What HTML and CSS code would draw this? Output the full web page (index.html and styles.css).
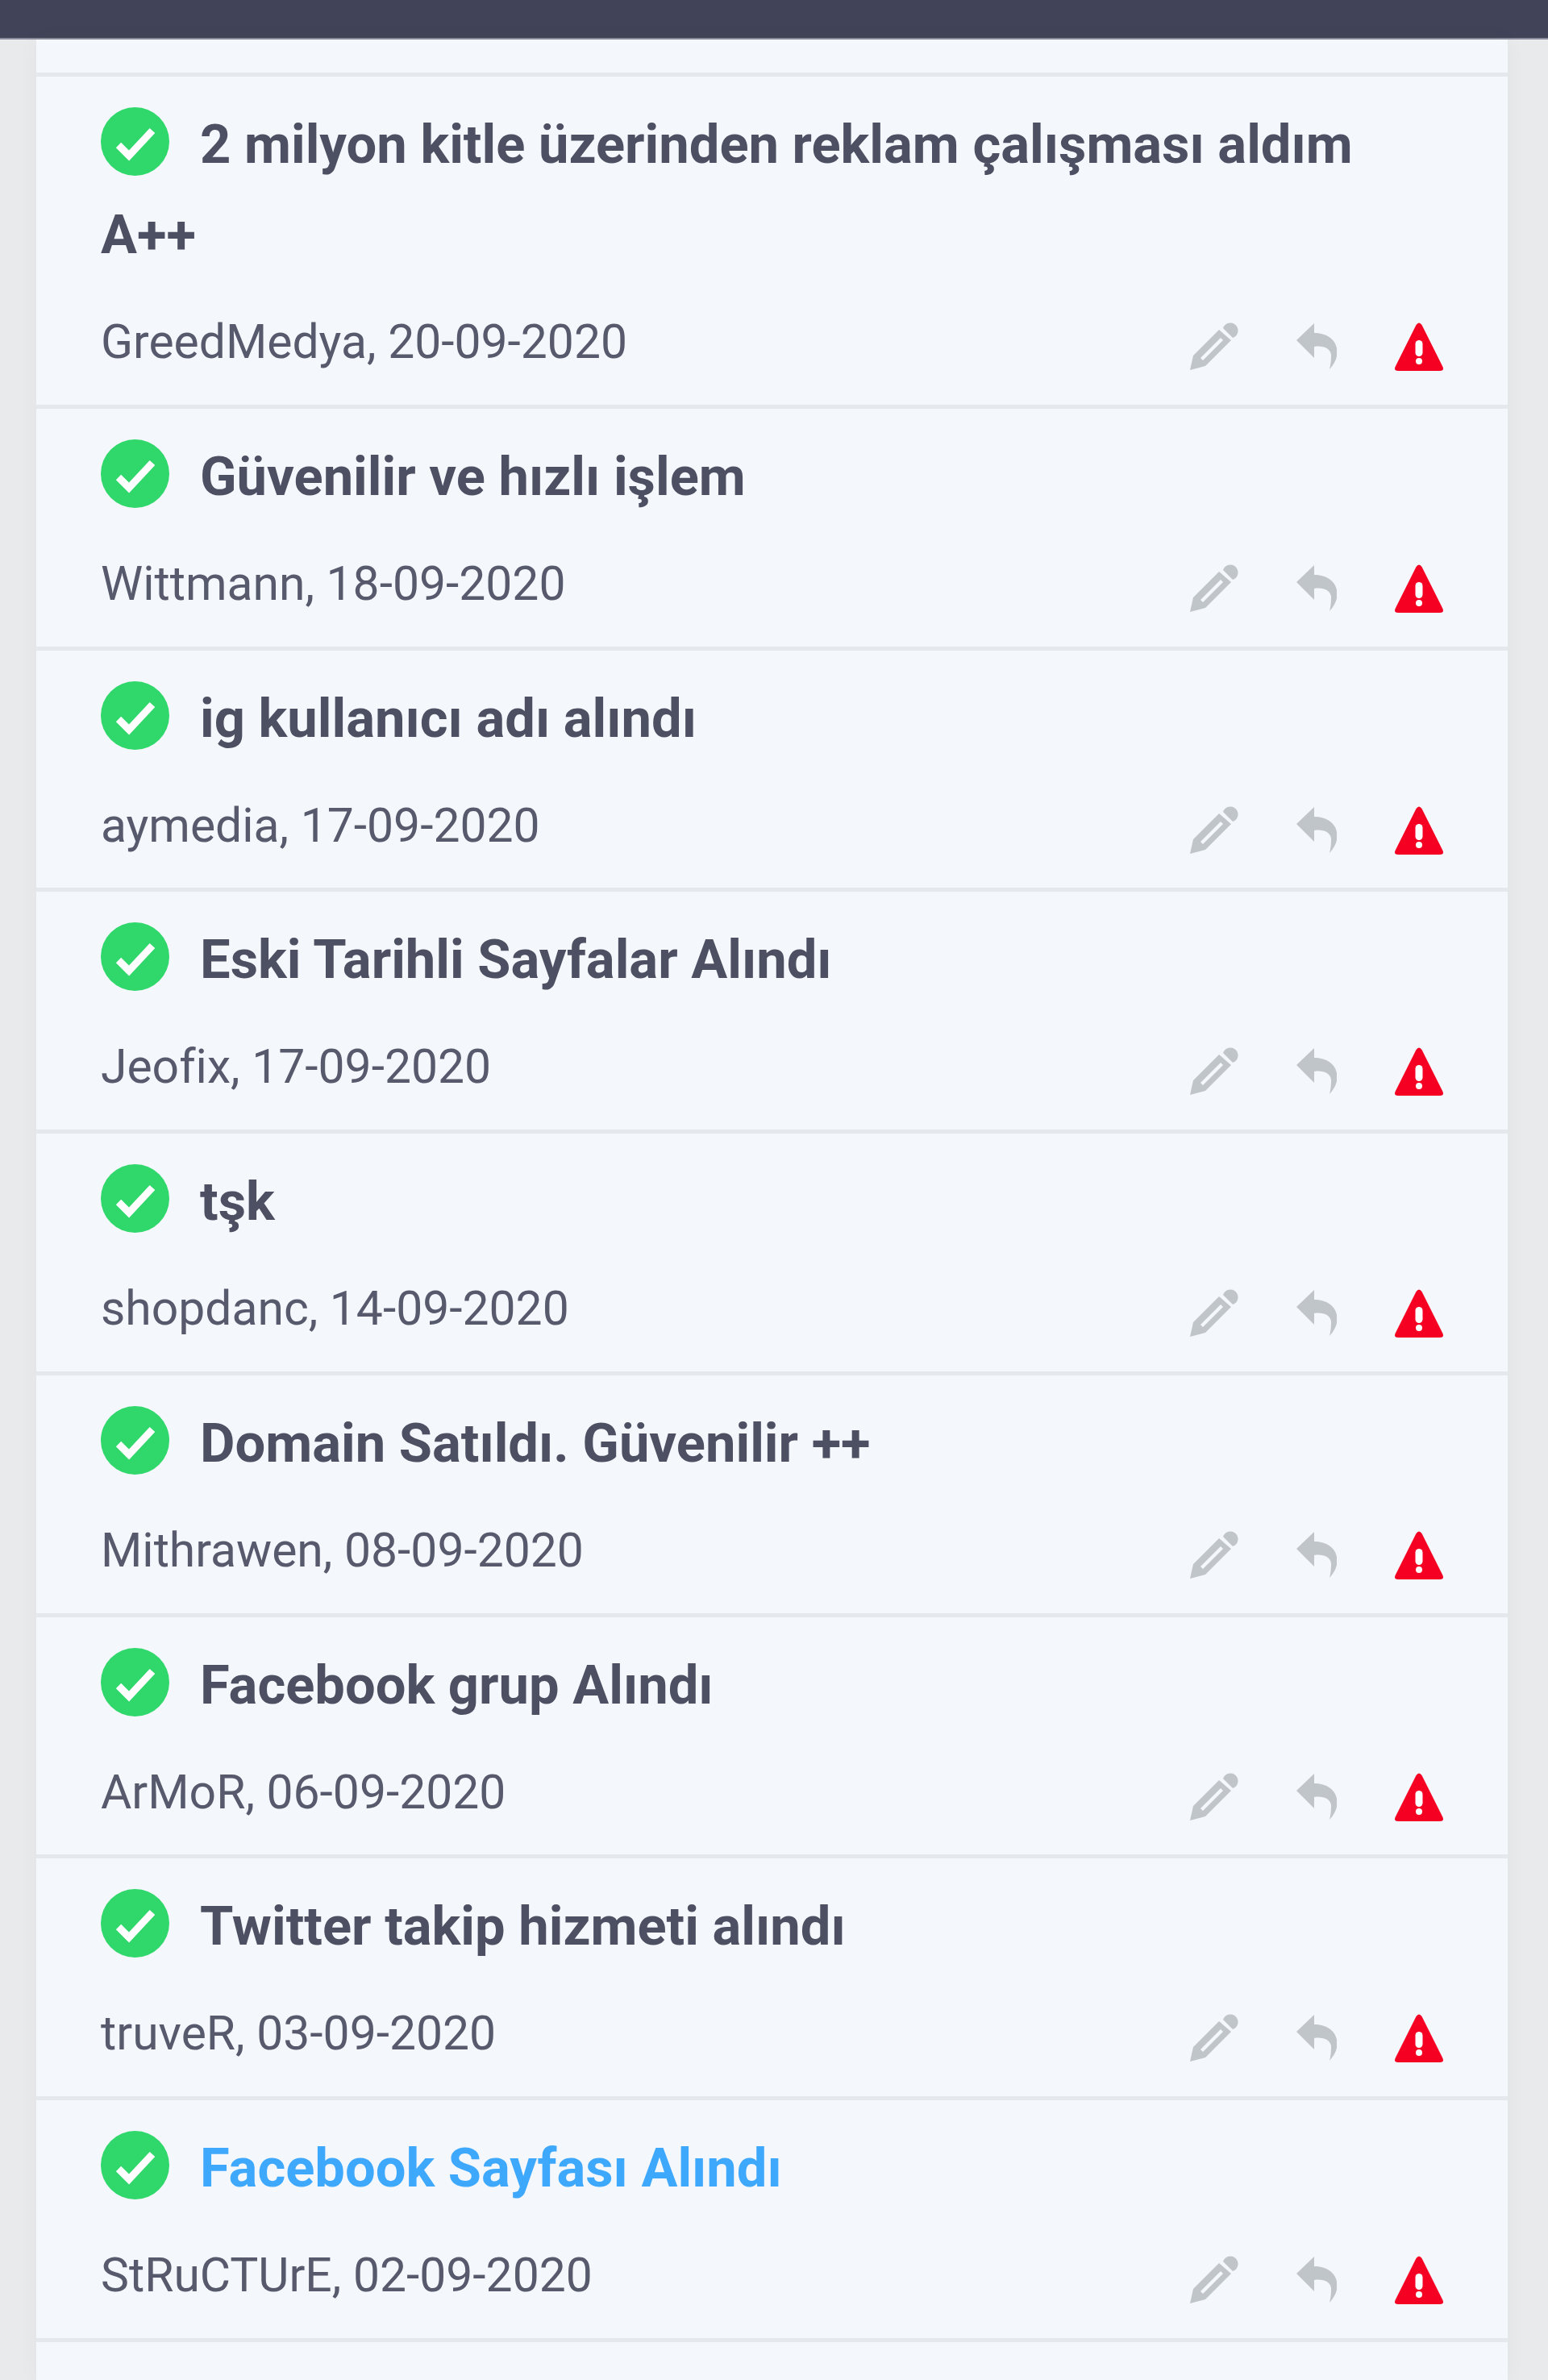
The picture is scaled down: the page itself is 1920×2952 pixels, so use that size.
FILE: index.html
```html
<!DOCTYPE html>
<html lang="tr">
<head>
    <meta charset="UTF-8">
    <meta name="viewport" content="width=device-width, initial-scale=1.0">
    <title>Yorumlar</title>
    <link rel="stylesheet" href="styles.css">
</head>
<body>
    <svg class="simgeler">
        <symbol id="onay" viewBox="0 0 85 85">
            <circle cx="42.5" cy="42.5" r="42.5" fill="#30d76a"/>
            <path d="M22 47 L35 60 L64 29" fill="none" stroke="#fff" stroke-width="9"/>
        </symbol>
        <symbol id="kalem" viewBox="0 0 60 60">
            <path fill-rule="evenodd" d="M0 59 L4 41 L36 9 L51 22 L19 54 Z M13 44 L16 47 L41 22 L38 19 Z"/>
            <path d="M41 7 A9.5 9.5 0 1 1 53 19 Z"/>
        </symbol>
        <symbol id="yanit" viewBox="0 0 50 60">
            <path d="M22 1 L0 22 L22 44 V30 C32 28 44 32 43 42 C43 48 42 54 41 58 C48 50 52 42 50 32 C48 20 36 13 22 13 Z"/>
        </symbol>
        <symbol id="uyari" viewBox="0 0 60 60">
            <path fill="#f50022" d="M26.5 3 Q30 -2 33.5 3 L59 54 Q62 60 56 60 H4 Q-2 60 1 54 Z"/>
            <rect x="25.5" y="22" width="9" height="20" rx="4.5" fill="#fff"/>
            <circle cx="30" cy="48" r="4" fill="#fff"/>
        </symbol>
    </svg>

    <div class="ust-bar"></div>

    <ul class="yorumlar">
        <li class="yorum-bos"></li>

        <li class="yorum">
            <div class="baslik"><svg class="onay"><use href="#onay"/></svg>2 milyon kitle üzerinden reklam çalışması aldım A++</div>
            <div class="alt">
                <span class="yazar">GreedMedya, 20-09-2020</span>
                <div class="islemler">
                    <svg class="kalem"><use href="#kalem"/></svg>
                    <svg class="yanit"><use href="#yanit"/></svg>
                    <svg class="uyari"><use href="#uyari"/></svg>
                </div>
            </div>
        </li>

        <li class="yorum">
            <div class="baslik"><svg class="onay"><use href="#onay"/></svg>Güvenilir ve hızlı işlem</div>
            <div class="alt">
                <span class="yazar">Wittmann, 18-09-2020</span>
                <div class="islemler">
                    <svg class="kalem"><use href="#kalem"/></svg>
                    <svg class="yanit"><use href="#yanit"/></svg>
                    <svg class="uyari"><use href="#uyari"/></svg>
                </div>
            </div>
        </li>

        <li class="yorum">
            <div class="baslik"><svg class="onay"><use href="#onay"/></svg>ig kullanıcı adı alındı</div>
            <div class="alt">
                <span class="yazar">aymedia, 17-09-2020</span>
                <div class="islemler">
                    <svg class="kalem"><use href="#kalem"/></svg>
                    <svg class="yanit"><use href="#yanit"/></svg>
                    <svg class="uyari"><use href="#uyari"/></svg>
                </div>
            </div>
        </li>

        <li class="yorum">
            <div class="baslik"><svg class="onay"><use href="#onay"/></svg>Eski Tarihli Sayfalar Alındı</div>
            <div class="alt">
                <span class="yazar">Jeofix, 17-09-2020</span>
                <div class="islemler">
                    <svg class="kalem"><use href="#kalem"/></svg>
                    <svg class="yanit"><use href="#yanit"/></svg>
                    <svg class="uyari"><use href="#uyari"/></svg>
                </div>
            </div>
        </li>

        <li class="yorum">
            <div class="baslik"><svg class="onay"><use href="#onay"/></svg>tşk</div>
            <div class="alt">
                <span class="yazar">shopdanc, 14-09-2020</span>
                <div class="islemler">
                    <svg class="kalem"><use href="#kalem"/></svg>
                    <svg class="yanit"><use href="#yanit"/></svg>
                    <svg class="uyari"><use href="#uyari"/></svg>
                </div>
            </div>
        </li>

        <li class="yorum">
            <div class="baslik"><svg class="onay"><use href="#onay"/></svg>Domain Satıldı. Güvenilir ++</div>
            <div class="alt">
                <span class="yazar">Mithrawen, 08-09-2020</span>
                <div class="islemler">
                    <svg class="kalem"><use href="#kalem"/></svg>
                    <svg class="yanit"><use href="#yanit"/></svg>
                    <svg class="uyari"><use href="#uyari"/></svg>
                </div>
            </div>
        </li>

        <li class="yorum">
            <div class="baslik"><svg class="onay"><use href="#onay"/></svg>Facebook grup Alındı</div>
            <div class="alt">
                <span class="yazar">ArMoR, 06-09-2020</span>
                <div class="islemler">
                    <svg class="kalem"><use href="#kalem"/></svg>
                    <svg class="yanit"><use href="#yanit"/></svg>
                    <svg class="uyari"><use href="#uyari"/></svg>
                </div>
            </div>
        </li>

        <li class="yorum">
            <div class="baslik"><svg class="onay"><use href="#onay"/></svg>Twitter takip hizmeti alındı</div>
            <div class="alt">
                <span class="yazar">truveR, 03-09-2020</span>
                <div class="islemler">
                    <svg class="kalem"><use href="#kalem"/></svg>
                    <svg class="yanit"><use href="#yanit"/></svg>
                    <svg class="uyari"><use href="#uyari"/></svg>
                </div>
            </div>
        </li>

        <li class="yorum">
            <div class="baslik ziyaret"><svg class="onay"><use href="#onay"/></svg>Facebook Sayfası Alındı</div>
            <div class="alt">
                <span class="yazar">StRuCTUrE, 02-09-2020</span>
                <div class="islemler">
                    <svg class="kalem"><use href="#kalem"/></svg>
                    <svg class="yanit"><use href="#yanit"/></svg>
                    <svg class="uyari"><use href="#uyari"/></svg>
                </div>
            </div>
        </li>

        <li class="yorum-bos son"></li>
    </ul>
</body>
</html>
```

FILE: styles.css
```css
html {
    height: 100%;
    overflow: hidden;
}

body {
    font-family: 'Roboto', sans-serif;
    background-color: #e9eaec;
    margin: 0;
}

.simgeler {
    display: none;
}

.ust-bar {
    height: 47px;
    background-color: #414358;
    border-bottom: 2px solid #8b8c9b;
}

.yorumlar {
    list-style: none;
    margin: 0 50px 0 45px;
    padding: 0;
    background-color: #f4f8fc;
    box-shadow: 0 0 24px rgba(0, 0, 0, 0.04);
}

.yorum-bos {
    height: 41px;
    border-bottom: 5px solid #e5e9ed;
}

.yorum-bos.son {
    height: 47px;
    border-bottom: none;
}

.yorum {
    padding: 28px 80px 35.75px 80px;
    border-bottom: 5px solid #e5e9ed;
}

.baslik {
    font-size: 66.9px;
    font-weight: 700;
    line-height: 112px;
    color: #4d5062;
}

.baslik.ziyaret {
    color: #3ea8fd;
}

.onay {
    width: 85px;
    height: 85px;
    margin-right: 38px;
    vertical-align: -16px;
}

.alt {
    display: flex;
    justify-content: space-between;
    align-items: flex-start;
    margin-top: 35px;
}

.yazar {
    font-size: 58.8px;
    line-height: 84px;
    color: #565a6c;
}

.islemler {
    display: flex;
    gap: 72px;
    margin-top: 18px;
}

.kalem,
.yanit,
.uyari {
    height: 60px;
    fill: #c0c5c9;
}

.kalem,
.uyari {
    width: 60px;
}

.yanit {
    width: 50px;
}
```
